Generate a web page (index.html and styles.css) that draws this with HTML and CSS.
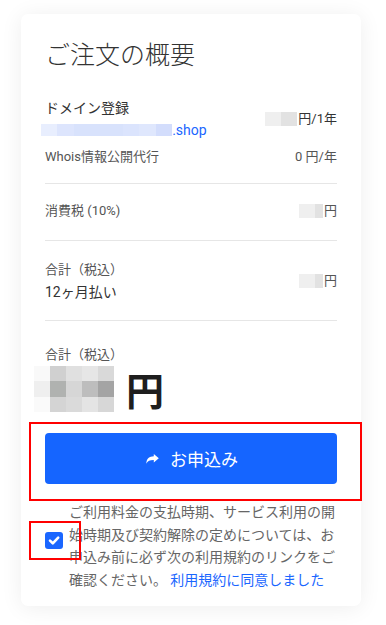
FILE: index.html
```html
<!DOCTYPE html>
<html lang="ja">
<head>
<meta charset="utf-8">
<link rel="stylesheet" href="styles.css">
</head>
<body>
<div class="card">
  <h1 class="title">ご注文の概要</h1>

  <div class="row row-domain">
    <div class="left">
      <div class="label-dark">ドメイン登録</div>
      <div class="domain"><span class="blur-blue"><i></i><i></i><i></i><i></i><i></i><i></i><i></i><i></i></span><a class="link">.shop</a></div>
    </div>
    <div class="value"><span class="blur-sm"><i></i><i></i></span>円/1年</div>
  </div>
  <div class="row row-whois">
    <div class="label">Whois情報公開代行</div>
    <div class="value">0 円/年</div>
  </div>

  <div class="section sec-tax">
    <div class="row">
      <div class="label">消費税 (10%)</div>
      <div class="value"><span class="blur-sm"><i></i><i></i></span>円</div>
    </div>
  </div>

  <div class="section sec-total">
    <div class="row">
      <div class="left">
        <div class="label line2">合計（税込）</div>
        <div class="label-dark line2">12ヶ月払い</div>
      </div>
      <div class="value"><span class="blur-sm"><i></i><i></i></span>円</div>
    </div>
  </div>

  <div class="grand">
    <div class="label">合計（税込）</div>
    <div class="grand-price"><span class="blur-lg"><i></i><i></i><i></i><i></i><i></i><i></i><i></i><i></i><i></i><i></i><i></i><i></i><i></i><i></i><i></i></span><span class="yen">円</span></div>
  </div>

  <div class="btn-wrap">
    <button class="btn"><svg class="share" width="13" height="10" viewBox="0 0 13 10"><path d="M12.8 4.3 L7.8 0 V2.3 C3.4 2.5 0.5 4.4 0.3 9.8 C1.5 6.9 4.3 5.9 7.8 6 V8.6 Z" fill="#fff"/></svg><span>お申込み</span></button>
    <div class="highlight hl-btn"></div>
  </div>

  <div class="agree">
    <div class="check-wrap">
      <svg class="check" width="18" height="17" viewBox="0 0 18 17"><rect x="0" y="0" width="18" height="17" rx="3" fill="#1a66ff"/><path d="M5 8.6 L7.8 11.3 L13.2 5.6" stroke="#fff" stroke-width="2.6" fill="none" stroke-linecap="round" stroke-linejoin="round"/></svg>
      <div class="highlight hl-check"></div>
    </div>
    <p class="agree-text">ご利用料金の支払時期、サービス利用の開始時期及び契約解除の定めについては、お申込み前に必ず次の利用規約のリンクをご確認ください。 <a class="link agree-link">利用規約に同意しました</a></p>
  </div>
</div>
</body>
</html>
```

FILE: styles.css
```css
* { box-sizing: border-box; }
html, body { margin: 0; background: #fff; }
body {
  padding: 14px 25px 20px 21px;
  font-family: Roboto, "Noto Sans CJK JP", sans-serif;
  color: #333;
}
.card {
  position: relative;
  background: #fff;
  border-radius: 7px;
  box-shadow: 0 2px 22px rgba(0, 0, 0, 0.07);
  padding: 22px 24px 15px 24px;
}
.title {
  margin: 0;
  font-family: "Noto Sans CJK JP", sans-serif;
  font-size: 25px;
  font-weight: 300;
  line-height: 34px;
  color: #333;
}
.row {
  display: flex;
  justify-content: space-between;
  align-items: center;
}
.row-domain { margin-top: 27px; }
.row-domain .left > div { line-height: 22px; }
.label-dark { font-size: 14px; color: #333; line-height: 22px; }
.label { font-size: 13px; color: #555; line-height: 20px; }
.value {
  font-size: 13px;
  color: #555;
  line-height: 20px;
  display: flex;
  align-items: center;
}
.row-domain .value { color: #333; }
.domain { display: flex; align-items: center; font-size: 14px; }
.link { color: #1a66ff; text-decoration: none; }
.blur-blue { display: inline-flex; height: 12px; margin-left: -4px; }
.blur-blue i { width: 16.4px; height: 12px; background: #d8e2fc; }
.blur-blue i:nth-child(1) { background: #e8eefe; }
.blur-blue i:nth-child(2) { background: #dde5fd; }
.blur-blue i:nth-child(6) { background: #dbe4fd; }
.blur-blue i:nth-child(7) { background: #dfe7fd; }
.blur-blue i:nth-child(8) { background: #d3ddfc; }
.blur-sm { display: inline-flex; margin-right: 1px; }
.blur-sm i { width: 16px; height: 14px; background: #efefef; }
.blur-sm i:nth-child(2) { background: #e2e2e2; width: 8px; }
.row-domain .blur-sm i:nth-child(2) { width: 16px; }
.row-whois { margin-top: 6px; }
.section {
  border-top: 1px solid #e6e6e6;
  margin-top: 16px;
}
.sec-tax { padding: 17px 0 19px; }
.sec-tax + .section { margin-top: 0; padding: 17px 0 16px; }
.line2 { line-height: 23px; }
.sec-total { border-bottom: 1px solid #e6e6e6; }
.grand { padding-top: 24px; }
.grand-price {
  display: flex;
  align-items: center;
  margin-left: -11px;
  height: 46px;
  margin-top: 1px;
}
.blur-lg {
  display: grid;
  grid-template-columns: repeat(5, 16px);
  grid-template-rows: repeat(3, 15.33px);
}
.blur-lg i:nth-child(1) { background: #f9f9f9; }
.blur-lg i:nth-child(2) { background: #d0d0d0; }
.blur-lg i:nth-child(3) { background: #e0e0e0; }
.blur-lg i:nth-child(4) { background: #e6e6e6; }
.blur-lg i:nth-child(5) { background: #d9d9d9; }
.blur-lg i:nth-child(6) { background: #efefef; }
.blur-lg i:nth-child(7) { background: #b0b2b0; }
.blur-lg i:nth-child(8) { background: #d6d6d6; }
.blur-lg i:nth-child(9) { background: #bdbdbd; }
.blur-lg i:nth-child(10) { background: #a4a4a4; }
.blur-lg i:nth-child(11) { background: #fafafa; }
.blur-lg i:nth-child(12) { background: #d4d4d4; }
.blur-lg i:nth-child(13) { background: #dadada; }
.blur-lg i:nth-child(14) { background: #e4e4e4; }
.blur-lg i:nth-child(15) { background: #d7d7d7; }
.yen {
  font-family: "Noto Sans CJK JP", sans-serif;
  font-size: 38px;
  font-weight: 700;
  color: #1e1e1e;
  margin-left: 12px;
  line-height: 46px;
}
.btn-wrap { position: relative; margin-top: 21px; }
.btn {
  width: 100%;
  height: 51px;
  border: 0;
  border-radius: 4px;
  background: #1565ff;
  color: #fff;
  font-family: "Noto Sans CJK JP", sans-serif;
  font-size: 17px;
  display: flex;
  align-items: center;
  justify-content: center;
  gap: 11px;
  padding: 0 0 0 2px;
}
.share { display: block; margin-top: 1px; }
.highlight {
  position: absolute;
  border: 2px solid #ff0000;
  pointer-events: none;
}
.hl-btn { left: -16px; top: -11px; right: -25px; bottom: -17px; }
.agree {
  display: flex;
  align-items: flex-start;
  gap: 6px;
  margin-top: 16px;
}
.check-wrap { position: relative; margin-top: 32px; flex: none; width: 18px; height: 17px; }
.check { display: block; }
.hl-check { left: -16px; top: -11px; right: -18px; bottom: -11px; }
.agree-text {
  margin: 0;
  font-family: "Noto Sans CJK JP", sans-serif;
  font-size: 14px;
  line-height: 22.7px;
  color: #666;
  width: 270px;
}
.agree-link { display: inline-block; line-height: 22.7px; vertical-align: top; }
```
